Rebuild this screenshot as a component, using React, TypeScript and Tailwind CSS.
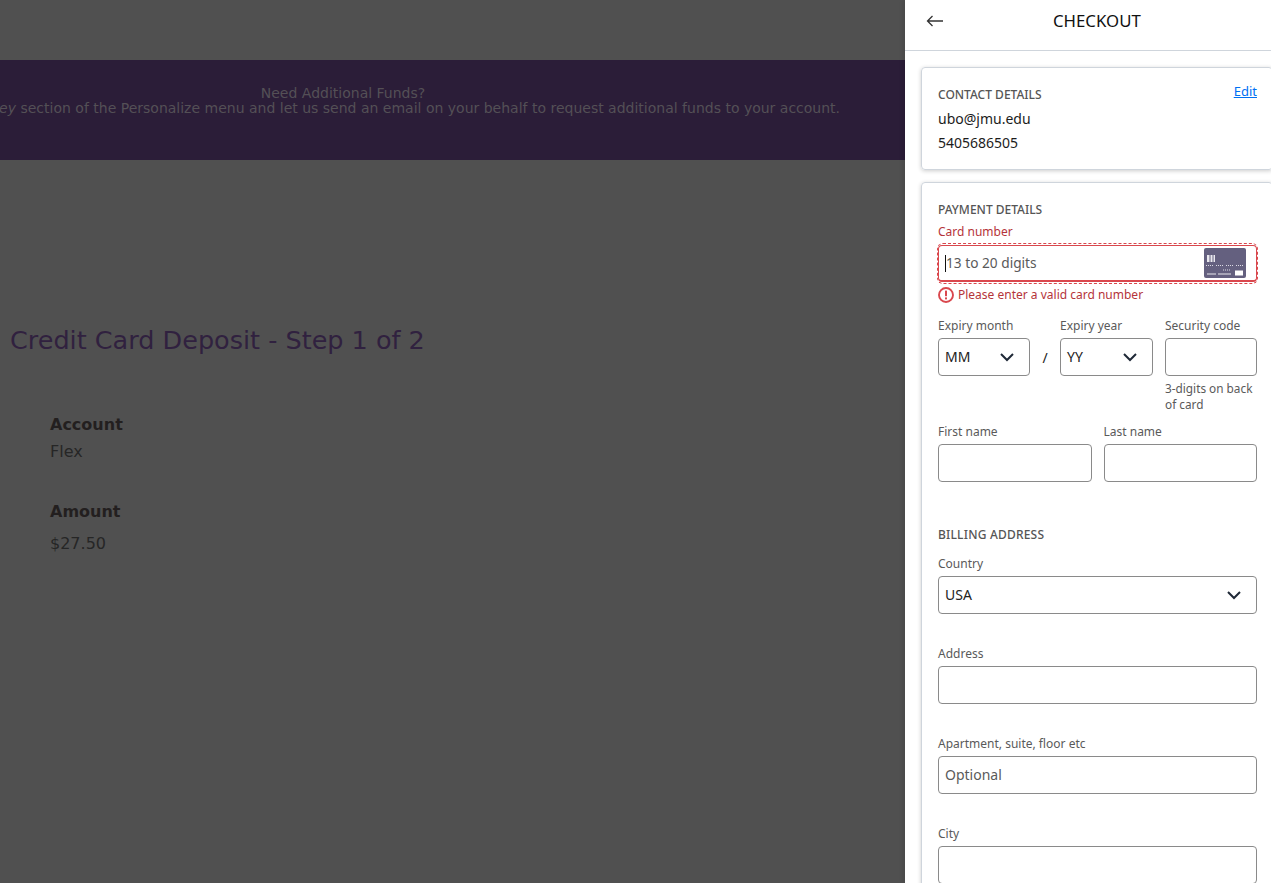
import React from "react";

const Label = ({ children, className = "" }: { children: React.ReactNode; className?: string }) => (
  <div className={`text-[12px] leading-[16px] text-[#5a5a5a] ${className}`}>{children}</div>
);

const Field = ({ placeholder = "" }: { placeholder?: string }) => (
  <input
    placeholder={placeholder}
    className="block w-full h-[38px] rounded-[4px] border border-[#8a8a8a] bg-white px-[6px] pb-[1px] text-[14px] text-[#222] placeholder:text-[#5a5a5a] outline-none"
  />
);

const Select = ({ value }: { value: string }) => (
  <div className="flex h-[38px] w-full items-center justify-between rounded-[4px] border border-[#8a8a8a] bg-white pb-[1px] pl-[6px] pr-[14px] text-[14px] text-[#222]">
    <span>{value}</span>
    <svg width="16" height="10" viewBox="0 0 16 10" fill="none" className="shrink-0">
      <path d="M2 2l6 6 6-6" stroke="#1f2937" strokeWidth="2" />
    </svg>
  </div>
);

const CardIcon = () => (
  <svg width="42" height="30" viewBox="0 0 42 30" className="shrink-0">
    <rect width="42" height="30" rx="2" fill="#64607f" />
    <rect x="3" y="7" width="8" height="7" fill="#e9e8ee" />
    <rect x="5.5" y="7" width="1" height="7" fill="#64607f" />
    <rect x="8.5" y="7" width="1" height="7" fill="#64607f" />
    <g stroke="#dcdbe4" strokeWidth="1" strokeDasharray="1 1">
      <path d="M2 17.5h7M12 17.5h7M22 17.5h7M32 17.5h7M19 22h7" />
    </g>
    <g stroke="#e9e8ee" strokeWidth="1">
      <path d="M3 26h9M14 26h13" />
    </g>
    <rect x="31" y="22.5" width="8" height="5" fill="#fff" />
  </svg>
);

export default function App() {
  return (
    <div className="flex h-[883px] w-full overflow-hidden bg-[#505050]">
      <main className="h-full w-[905px] shrink-0 overflow-hidden font-['DejaVu_Sans',sans-serif]">
        <section className="mt-[60px] flex h-[100px] w-[1128px] -ml-[221px] flex-col items-center whitespace-nowrap bg-[#2b1d38] pt-[26px] text-[14px] leading-[15px] text-[#545056]">
          <p>Need Additional Funds?</p>
          <p>
            Visit the <i>Request Money</i> section of the Personalize menu and let us send an email on your behalf to request additional funds to your account.
          </p>
        </section>
        <h1 className="mt-[164px] pl-[10px] text-[25.5px] leading-[32px] text-[#30213f]">
          Credit Card Deposit - Step 1 of 2
        </h1>
        <dl className="mt-[59px] pl-[50px] text-[16px] text-[#262626]">
          <dt className="font-bold leading-[20px] text-[#231f1f]">Account</dt>
          <dd className="mt-[7px] leading-[20px]">Flex</dd>
          <dt className="mt-[40px] font-bold leading-[20px] text-[#231f1f]">Amount</dt>
          <dd className="mt-[12px] leading-[20px]">$27.50</dd>
        </dl>
      </main>

      <aside className="h-full w-[366px] shrink-0 overflow-hidden bg-white font-['Noto_Sans',sans-serif] shadow-[-2px_0_4px_rgba(0,0,0,0.1)]">
        <header className="flex h-[51px] items-center border-b border-[#cfd5dc] pb-[8px] pl-[21px]">
          <svg width="18" height="12" viewBox="0 0 18 12" fill="none" className="shrink-0 text-[#333]">
            <path d="M17 6H1.5M6.5 1L1.5 6l5 5" stroke="currentColor" strokeWidth="1.3" />
          </svg>
          <h2 className="ml-[109px] text-[16.8px] text-[#111]">CHECKOUT</h2>
        </header>

        <div className="ml-[16px] mt-[16px] w-[352px]">
          <section className="h-[103px] rounded-[4px] border border-[#cfd5dc] pl-[16px] pr-[15px] pt-[18px] shadow-[0_1px_4px_rgba(0,0,0,0.2)]">
            <div className="flex items-start justify-between">
              <h3 className="pt-[1px] text-[12px] font-medium leading-[16px] text-[#555]">CONTACT DETAILS</h3>
              <a href="#" className="-mt-[3px] text-[13px] leading-[16px] text-[#0070f3] underline">Edit</a>
            </div>
            <p className="mt-[6px] text-[14px] leading-[20px] text-[#1c1c1c]">ubo@jmu.edu</p>
            <p className="mt-[4px] text-[14px] leading-[20px] text-[#1c1c1c]">5405686505</p>
          </section>

          <section className="mt-[12px] rounded-[4px] border border-[#cfd5dc] pl-[16px] pr-[15px] pt-[19px] pb-[40px] shadow-[0_1px_4px_rgba(0,0,0,0.2)]">
            <h3 className="text-[12px] font-medium leading-[16px] text-[#555]">PAYMENT DETAILS</h3>

            <Label className="mt-[6px] text-[#b5343a]!">Card number</Label>
            <div className="-mx-px mt-[3px] rounded-[6px] border border-dashed border-[#d9474d] px-0 py-px">
              <div className="flex h-[37px] items-center rounded-[4px] border border-b-2 border-[#d9474d] pl-[6px] pr-[10px]">
                <span className="h-[17px] w-px bg-[#111]" />
                <span className="flex-1 text-[13.7px] text-[#5a5a5a]">13 to 20 digits</span>
                <CardIcon />
              </div>
            </div>
            <div className="mt-[3px] flex items-center gap-[4px]">
              <svg width="16" height="16" viewBox="0 0 16 16" fill="none">
                <circle cx="8" cy="8" r="7" stroke="#d9474d" strokeWidth="1.9" />
                <rect x="7" y="3.6" width="2" height="5.6" fill="#d9474d" />
                <rect x="7" y="10.4" width="2" height="2" fill="#d9474d" />
              </svg>
              <span className="text-[12px] leading-[16px] text-[#b5343a]">Please enter a valid card number</span>
            </div>

            <div className="mt-[15px] flex items-start">
              <div className="w-[92px]">
                <Label>Expiry month</Label>
                <div className="mt-[4px]"><Select value="MM" /></div>
              </div>
              <div className="mt-[20px] flex h-[38px] w-[30px] items-center justify-center text-[14px] text-[#222]">/</div>
              <div className="w-[93px]">
                <Label>Expiry year</Label>
                <div className="mt-[4px]"><Select value="YY" /></div>
              </div>
              <div className="ml-[12px] w-[92px]">
                <Label>Security code</Label>
                <div className="mt-[4px]"><Field /></div>
                <p className="mt-[4px] text-[11.8px] leading-[16px] text-[#5a5a5a]">3-digits on back of card</p>
              </div>
            </div>

            <div className="mt-[12px] grid grid-cols-2 gap-x-[12px]">
              <div>
                <Label>First name</Label>
                <div className="mt-[4px]"><Field /></div>
              </div>
              <div>
                <Label>Last name</Label>
                <div className="mt-[4px]"><Field /></div>
              </div>
            </div>

            <h3 className="mt-[45px] text-[12px] font-medium leading-[16px] tracking-[0.2px] text-[#555]">BILLING ADDRESS</h3>
            <Label className="mt-[13px]">Country</Label>
            <div className="mt-[4px]"><Select value="USA" /></div>

            <Label className="mt-[32px]">Address</Label>
            <div className="mt-[4px]"><Field /></div>

            <Label className="mt-[32px]">Apartment, suite, floor etc</Label>
            <div className="mt-[4px]"><Field placeholder="Optional" /></div>

            <Label className="mt-[32px]">City</Label>
            <div className="mt-[4px]"><Field /></div>
          </section>
        </div>
      </aside>
    </div>
  );
}
